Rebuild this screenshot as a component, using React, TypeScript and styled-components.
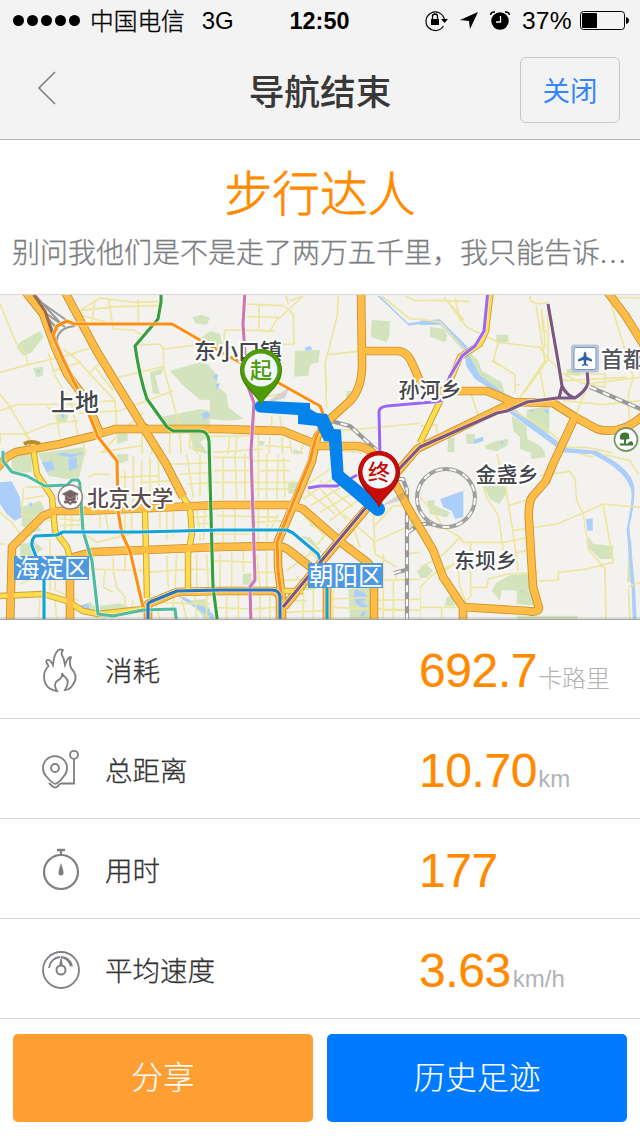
import React from "react";
import styled, { createGlobalStyle } from "styled-components";

const GlobalStyle = createGlobalStyle`
  * { box-sizing: border-box; }
  body {
    margin: 0;
    background: #fff;
    font-family: "Liberation Sans", "Noto Sans CJK SC", sans-serif;
  }
`;

const Screen = styled.div`
  width: 640px;
  height: 1136px;
  display: flex;
  flex-direction: column;
  background: #fff;
  overflow: hidden;
`;

const StatusBar = styled.header`
  display: grid;
  grid-template-columns: 1fr auto 1fr;
  align-items: center;
  height: 40px;
  padding: 0 11px 2px 13px;
  background: #f3f3f3;
  color: #000;
  font-size: 24px;
  line-height: 38px;
`;

const StatusSide = styled.div<{ $end?: boolean }>`
  display: flex;
  align-items: center;
  justify-content: ${(p) => (p.$end ? "flex-end" : "flex-start")};
  height: 38px;
`;

const SignalDots = styled.div`
  display: flex;
  gap: 3px;
  margin-right: 10px;
`;

const Dot = styled.i`
  width: 11px;
  height: 11px;
  border-radius: 50%;
  background: #000;
`;

const Carrier = styled.span`
  font-family: "Noto Sans CJK SC", sans-serif;
  font-weight: 300;
  font-size: 23.7px;
  -webkit-text-stroke: 0.35px currentColor;
`;

const Network = styled.span`
  margin-left: 17px;
  padding-top: 2px;
`;

const Clock = styled.time`
  font-weight: 700;
  font-size: 23.4px;
  padding: 2px 3px 0 0;
`;

const Percent = styled.span`
  font-size: 24.6px;
  letter-spacing: 0.3px;
  margin: 2px 8px 0 11px;
`;

const NavBar = styled.nav`
  display: grid;
  grid-template-columns: 100px 1fr 100px;
  align-items: center;
  height: 100px;
  padding: 0 20px;
  background: #f3f3f3;
  border-bottom: 1px solid #b4b4b4;
`;

const BackButton = styled.button`
  width: 54px;
  height: 66px;
  padding: 0;
  margin-bottom: 2px;
  border: 0;
  background: none;
`;

const NavTitle = styled.h1`
  margin: 0;
  text-align: center;
  font: 500 35.7px/50px "Noto Sans CJK SC", sans-serif;
  color: #383838;
`;

const CloseButton = styled.button`
  height: 66px;
  padding: 0 0 1px;
  border: 1px solid #c8c8c8;
  border-radius: 6px;
  background: none;
  color: #3385ff;
  font: 400 27.5px/60px "Noto Sans CJK SC", sans-serif;
`;

const Hero = styled.section`
  height: 155px;
  padding: 16px 12px 0;
  border-bottom: 1px solid #d6d6d6;
  text-align: center;
`;

const HeroTitle = styled.h2`
  margin: 0;
  color: #ff8a00;
  font: 300 47.7px/70px "Noto Sans CJK SC", sans-serif;
  -webkit-text-stroke: 0.8px currentColor;
`;

const HeroText = styled.p`
  margin: 3px 0 0;
  color: #7c7e82;
  font: 300 28px/44px "Noto Sans CJK SC", sans-serif;
  -webkit-text-stroke: 0.3px currentColor;
  text-align: left;
  white-space: nowrap;
`;

const Ellipsis = styled.span`
  letter-spacing: 2.4px;
`;

const MapFrame = styled.section`
  flex: none;
  height: 325px;
  border-bottom: 1px solid #a9a8a6;
  overflow: hidden;
`;

const StatList = styled.ul`
  list-style: none;
  margin: 0;
  padding: 0;
`;

const StatRow = styled.li`
  display: grid;
  grid-template-columns: 105px 314px 1fr;
  align-items: center;
  height: 100px;
  padding-top: 1px;
  border-bottom: 1px solid #d6d6d6;

  &:first-child {
    height: 99px;
    padding-top: 0;
  }
`;

const StatIcon = styled.svg`
  width: 44px;
  height: 48px;
  margin: 4px 0 0 39px;
  fill: none;
  stroke: #7d7f83;
  stroke-width: 1.8;
`;

const StatLabel = styled.span`
  color: #333;
  font: 300 27.5px/40px "Noto Sans CJK SC", sans-serif;
  -webkit-text-stroke: 0.3px currentColor;
`;

const StatValue = styled.span`
  display: flex;
  align-items: baseline;
  padding-top: 4px;
  color: #ff8a00;
  font-size: 48px;
  line-height: 56px;
  letter-spacing: -0.4px;
  -webkit-text-stroke: 0.2px currentColor;
`;

const Unit = styled.small<{ $gap?: number }>`
  margin-left: ${(p) => p.$gap ?? 0}px;
  color: #b0b3b7;
  font-size: 24px;
  font-weight: 300;
  line-height: 20px;
  letter-spacing: 0;
  -webkit-text-stroke: 0;
`;

const Actions = styled.footer`
  display: flex;
  flex: none;
  gap: 14px;
  padding: 15px 13px 0;
`;

const ActionButton = styled.button<{ $color: string }>`
  flex: 1;
  height: 88px;
  padding: 0 0 6px;
  border: 0;
  border-radius: 5px;
  background: ${(p) => p.$color};
  color: #fff;
  font: 300 31.7px/60px "Noto Sans CJK SC", sans-serif;
  -webkit-text-stroke: 0.15px currentColor;
`;

const MapText = styled.text<{ $size?: number; $tone?: string }>`
  font-family: "Noto Sans CJK SC", sans-serif;
  font-weight: 500;
  font-size: ${(p) => p.$size ?? 21}px;
  fill: ${(p) => p.$tone ?? "#44464b"};
  stroke: #fff;
  stroke-width: 4px;
  stroke-linejoin: round;
  paint-order: stroke;
`;

const DistrictText = styled.text`
  font-family: "Noto Sans CJK SC", sans-serif;
  font-size: 24.5px;
  fill: #fff;
`;

const PinText = styled.text`
  font-family: "Noto Sans CJK SC", sans-serif;
  font-weight: 500;
  font-size: 22px;
  text-anchor: middle;
`;

/* The map is surveyed in six sheets, each drawn at three times its size. */
type Sheet = { x: number; y: number; green: string; water: string; minor: string };

const sheets: Sheet[] = [
  {
    x: 0, y: 294,
    green: "M60 145L120 110L130 130L95 175L70 185L50 160ZM578 70L605 62L630 72L620 92L585 88ZM600 135L625 115L660 110V165L620 170ZM100 222L130 218L128 245L108 250ZM510 230L600 205L660 222V315L600 318L545 270ZM450 235L490 222L485 240L465 245L480 300L458 298ZM480 370L600 345L660 355V395H500ZM170 350L205 362L200 385H170ZM350 415H383V440L352 450ZM50 485L110 478L250 460L255 510H40ZM570 420L600 415L620 430L600 445L625 480L580 470Z",
    water: "M168 480L200 475L205 500L172 508ZM225 480L248 475L250 500L228 502ZM605 360L620 352L632 365L612 378ZM180 362L195 358L190 375ZM110 230L122 228L118 238ZM632 270L650 265L640 285Z",
    minor: "M0 30L50 150L75 175L85 212M0 235L85 212L200 185L270 162M240 50L300 12L345 18L410 25L480 22M240 50L345 38L478 35M285 20L275 85M325 10L340 105L400 108L430 125M415 15V90M235 62L330 88M145 178L165 245L215 330L235 430M155 232L240 205L190 165M215 180L270 240L345 320L352 425L310 470M265 240L312 195M285 220L340 290M355 250L490 218M400 155L480 150L490 165L640 148M490 165L492 225L540 400M360 350L520 290M360 350L235 358M0 350L50 332L245 330M0 420H75L150 390L235 380M75 420L98 450M0 300L30 340L98 450M140 340L165 350L180 430M270 325L345 320M250 445L262 510M300 475L425 455M345 420L365 410L430 355M425 410L428 510M455 440V510M510 410L508 510M540 415L545 510M570 420L568 460L610 470M595 475L560 510M490 495L660 490M0 418V450",
  },
  {
    x: 210, y: 294,
    green: "M485 78L540 82L538 125L530 145L482 128ZM255 170L330 168L325 205L300 212L295 245L252 248ZM0 110L30 120L40 165H0ZM0 220L20 240L25 280L50 300L55 340L100 375L60 380L0 375ZM410 290L425 292V310L408 312ZM250 465L280 475L270 500H252ZM145 440L165 442L160 455H148Z",
    water: "M510 6L595 88L660 78V86L597 95L502 6ZM283 162L300 155L308 165L290 172ZM8 245L25 240L20 262ZM15 270L30 268L22 285Z",
    minor: "M105 30L220 35L250 60L252 150L190 152L155 210M240 20L280 6M147 32V105M110 68L205 70M228 6L235 30M205 70L180 110L45 108L40 165M105 108L195 112M205 75L280 6M385 6L382 65L345 210L350 345M355 182L445 172M515 6L600 75L660 75M585 6L615 20L660 18M190 320Q220 340 200 360M345 210L350 290M130 385L135 365M185 365V405M210 365L215 410M50 510L60 425M80 430L75 510M145 420V510M0 428L130 425M10 475L160 465M180 430L175 510M215 430L220 510M240 440L250 510M280 450L260 510M395 410L660 385M380 470L450 475L480 510M400 450L350 510M155 310L210 300M165 455L240 460",
  },
  {
    x: 420, y: 294,
    green: "M30 98L70 105L82 125L75 145L30 128ZM230 122L265 122V145H228ZM150 175L175 200L185 230L245 265L255 300L205 270L150 230ZM320 348L388 335V420L320 395ZM275 365L320 395L322 435L360 455L375 475L370 495L340 480L300 465L300 430L280 410ZM85 430H103V475L82 475ZM138 420H165V448L140 450ZM195 455L230 440L265 435L262 455L230 472L198 465ZM440 225L480 222V245L440 242Z",
    water: "M0 80L60 76L140 155L150 190L180 245L255 300L290 350L440 462L530 470L600 510H585L520 482L430 475L270 358L235 300L165 255L138 215L135 175L60 92L0 93ZM165 435L190 428V442L160 450ZM325 350L340 345V355ZM370 350L385 345V360ZM240 445L250 442L248 455Z",
    minor: "M0 20L80 18L140 100L235 145L360 160L385 195L430 240L480 265L500 268L555 280M72 10L130 75L120 80L105 10M235 145L220 200L285 242V298M360 232L380 340M215 200L282 240M330 6V20L355 30L385 25M348 35L375 200L290 325M370 75L375 160L360 170M383 30L385 195L310 300M365 45L368 110L380 115M570 10V20L640 250L625 300L628 400M590 10L660 12M425 240L430 260L620 250M430 240L555 240M500 270L660 250M500 280L465 370M430 320L550 332L660 320M280 350L380 405L440 460L500 460L570 475L600 510M0 395L50 392V420M150 290L180 380M50 20L150 22M285 272H300M0 75L60 85L135 170M555 240V280",
  },
  {
    x: 0, y: 454,
    green: "M35 0L95 0L95 55L35 58ZM115 0L255 0L235 80L200 75L145 65ZM65 160L120 140L135 165L100 205L125 230L95 235L65 215ZM60 270L105 265L130 285L75 320L60 305ZM300 455L360 448L390 460L350 475H300ZM235 455L270 445L300 470L260 475ZM570 440L615 435L635 480L640 495H615ZM350 0H385V20L355 30Z",
    water: "M0 85L35 82L60 130L65 190L45 200L20 180L0 150ZM125 25L155 20L165 45L140 55ZM205 15L230 10L232 40L208 52ZM165 0H240L215 12ZM235 455L265 448L270 465L245 470ZM530 425L555 430L590 450L640 470L640 495L600 470ZM85 150L95 145V160Z",
    minor: "M0 175L35 205L60 240M70 100L65 180L150 200M75 100L145 98M75 135L130 125M235 80L245 110M265 70L285 60L330 62M360 70L480 65M375 50V160M400 5V155M425 20V145M450 10V150M475 15L478 155M355 125L540 115M420 85L520 80M195 180V230M215 180V235M240 190L250 230M180 195L240 200M180 215L260 212M315 170L325 230M300 175V220M260 245L290 265L430 230M60 245L150 240M150 255V310M60 310L200 305L220 320M60 335L260 345L435 350M340 310V350L350 400L375 430V475M375 180V350M395 170V230M480 160V225M500 160V260M520 160V250M590 170L600 235M615 165L610 260M580 190L660 185M590 210L660 205M600 240V260M440 355L590 345M500 305L505 400M530 300L525 400M590 300V400M590 345L660 350M620 300L625 400M150 350V410M110 380L150 365M165 315V410M170 410L235 440M315 345L310 400L340 415M185 375H260M400 440L390 485M520 420V495M540 415L560 495M585 410L590 495M620 420V495M430 445L660 450M460 425L480 495M310 495L340 465M120 435L115 495M165 440L170 495M60 390L125 360L120 315M510 30L540 30L660 25M560 0L580 130M600 0V125M625 0V115M540 60L660 55M560 90L660 85M0 270H15",
  },
  {
    x: 210, y: 454,
    green: "M235 85L290 90L265 120L235 118ZM300 195L325 190V225L300 215ZM98 360L125 358V392L98 392ZM415 405L490 400L480 495H420ZM600 195L640 210L630 230L600 225ZM415 275L430 270L425 290ZM620 350L660 330V375L630 370ZM275 410L325 375L320 405ZM275 245L300 250L350 310L320 285Z",
    water: "M435 405L460 415L475 430L455 445L475 455L460 465L440 450L430 430ZM460 470L470 475L458 490L450 485ZM0 475Q15 480 12 495H0Z",
    minor: "M10 10H120M10 50L120 50M10 85L290 85M40 10V135M75 0L80 135M105 0V135M145 0V135M170 0V135M205 0L200 135M130 20L240 20M150 50L240 50M220 10L225 130M135 105H260M20 185L205 190M40 170V265M75 165V260M145 160V265M175 165L170 260M205 180L180 230M135 205L220 200M10 240L120 240M30 300V400M65 295V400M100 290V355M10 320L130 325M140 300L150 400M170 290V400M135 355H200M15 430V495M50 425V495M85 420V495M150 420V495M180 425V495M10 460L120 465M125 465L200 460M265 110L360 45M280 135L375 70M300 155L410 90M330 175L440 110M360 200L455 130M290 110L375 180M330 80L430 160M375 80L470 160M320 90L410 200M285 190L345 245L270 330M300 180L380 260M350 215L450 310M400 180L490 260L495 300L560 340M470 180L390 260M495 215L550 155H575M490 180L495 295M500 260L590 220M450 280L430 220M520 300L520 495M480 380L660 375M480 440L660 435M550 380V495M555 355L560 380M590 300L660 290M360 435L490 430M370 460L660 470M370 405V495M230 350L300 300M220 380L300 375M220 440L290 440M225 475L340 470M280 400V495M310 400V495M300 290L380 380",
  },
  {
    x: 420, y: 454,
    green: "M180 70L260 80L258 120L238 150L210 135L195 105ZM330 0L375 0V10L335 15ZM20 140L42 138L45 155L90 175L80 190L30 180ZM505 245L520 270L580 275L578 315L540 315L505 280ZM0 340L20 332L40 350L20 372H0ZM215 410L230 385L275 362L325 360L345 455L290 450V410L245 408L240 440ZM80 430L100 425L105 455H75ZM290 485L370 485L475 485L470 497H290ZM625 260H635V385H622Z",
    water: "M60 135L130 110L130 190L105 195L95 170L70 160ZM498 195L518 193V230H502ZM520 0H545Q635 45 643 100Q645 150 628 220L645 400L650 497H638L635 405L620 225Q635 150 635 120Q630 55 515 0ZM300 410L308 408V420Z",
    minor: "M180 70L200 130L235 185L250 290M230 0L255 90L280 240L295 350M265 155L320 138M280 230L410 210L495 175L550 150L660 160M360 65L450 52L465 75L470 140L490 180L505 285L555 345L558 495M550 155L580 325L500 345L415 355V378L355 382M0 130L45 180L70 220L120 250L130 265L250 265L330 250M120 250L60 310L0 340M152 265V430M155 400H200L205 375L265 360L355 355M90 335L40 360L0 400V495M0 460H110M65 460V495M150 430L120 450M625 400L660 385M625 405L630 495M75 350L100 330L115 350L120 400L140 450M545 0L630 20L655 60M480 0L520 10M270 300L320 290",
  },
];

const highways = [
  "M64 290L96 350L143 427L166 464L183 497",
  "M24 290L43 314L55 347L67 374L82 394L93 417L100 433",
  "M-5 470L7 457L16 452L60 444L93 436L115 429H220L283 431L320 446H357Q370 447 382 462L397 487L410 511L433 550L443 577L463 607V625",
  "M361 290L362 361Q363 387 350 401L328 421L317 437L312 461L297 497L278 541L278 565L282 600V622",
  "M365 351H397Q407 351 412 363L420 381L433 391H487L513 402L553 403L575 417L597 429Q622 436 645 414",
  "M606 290L625 315L645 347",
  "M575 417L553 464L546 481L532 497Q528 504 529 521L533 587L539 608Q538 613 528 611L463 607",
  "M10 625L11 587L12 547L20 539L43 516L55 511H83L220 505H290L303 509L343 544L367 562Q374 568 374 580V625",
  "M70 625V567L74 557L93 552L220 547L273 546Q283 545 290 551L327 580V625",
  "M148 625V604L177 592L220 591H273Q280 592 280 600V625",
  "M284 607L323 560L400 469L417 449L497 410L513 402",
];

const yellowRoads = [
  "M33 444L34 454L37 474L52 497L55 531L67 547L70 558",
  "M145 512L146 550L147 598",
  "M0 596L43 594L67 601L83 611L98 614L143 609",
  "M183 497L190 507L192 534L188 554V590",
  "M420 443L442 397L453 374L460 357L480 344L486 331L491 290",
  "M283 591H303",
];

const railways = [
  "M327 420L350 426L383 456L400 480",
  "M398 479H403L407 490V622",
  "M590 387L645 411",
  "M407 533Q424 520 434 525",
  "M394 573L406 570",
];

const subways: { color: string; d: string }[] = [
  { color: "#359f3b", d: "M161 290V302L158 319L135 346Q140 379 147 399L167 427L173 431H200Q208 431 209 441L213 587L218 625" },
  { color: "#cb76b5", d: "M245 290L243 324L247 384L254 403L251 451L255 580L250 587L251 625" },
  { color: "#ff8f14", d: "M80 394L62 357L53 336L57 326L67 321L74 324H172L200 340L230 357L277 382L320 406L325 419L316 437L310 461L277 542L278 571L282 600" },
  { color: "#ff8f14", d: "M80 394L90 417L98 437L117 461L118 511L122 534L130 551L143 607" },
  { color: "#4fbba2", d: "M3 451V461L12 472L27 476L45 486L67 485L72 480H77Q80 480 80 487L83 531L92 561L98 614L113 616L143 610L175 609L177 625" },
  { color: "#11a2d8", d: "M44 625V577L32 546Q31 540 35 536L57 535L63 532H140L220 530H287L293 533L318 554L324 570L327 590V625" },
  { color: "#2478bf", d: "M148 625V604Q149 602 155 600L177 591L220 590H272Q280 590 280 598V625" },
  { color: "#9b68f5", d: "M488 290L484 331L475 346L462 356L450 376L442 400Q438 402 433 402L387 406Q379 407 379 412L380 456" },
  { color: "#9b68f5", d: "M308 488L320 486H337L357 475" },
  { color: "#7c5881", d: "M548 304L558 361L562 386Q567 396 575 398M587 369L588 383Q586 391 575 398H557L527 402L507 411L497 413L420 447L400 468L377 494L283 607M562 386L559 398" },
];

function Pin({ x, y, color, dark, glyph }: { x: number; y: number; color: string; dark: string; glyph: string }) {
  return (
    <g transform={`translate(${x} ${y})`}>
      <path d="M2 33L29 16L24 27Z" fill="#777" opacity="0.25" />
      <path d="M0 35C-3 24 -21 16 -21 -1A21 21 0 0 1 21 -1C21 16 3 24 0 35Z" fill={dark} />
      <path d="M0 34C-2 23 -20 15 -20 -2A20 20 0 0 1 20 -2C20 11 11 18 6 24Z" fill={color} />
      <circle r="16.5" cy="-1" fill="#f1f7fb" />
      <PinText y="7" fill={color}>{glyph}</PinText>
    </g>
  );
}

function RouteMap() {
  return (
    <svg width="640" height="325" viewBox="0 295 640 325" strokeLinejoin="round">
      <rect y="295" width="640" height="325" fill="#f4f2ef" />
      {sheets.map((s) => (
        <svg key={`${s.x}-${s.y}`} x={s.x} y={s.y} width={s.x === 420 ? 220 : 210} height={s.y === 294 ? 160 : 170}
          viewBox={`0 0 ${s.x === 420 ? 660 : 630} ${s.y === 294 ? 480 : 510}`}>
          <path d={s.green} fill="#d2e3bd" />
          <path d={s.water} fill="#accefb" />
          <path d={s.minor} fill="none" stroke="#ece69f" strokeWidth="5" />
        </svg>
      ))}
      <g fill="none">
        <path d="M35 295L63 326M38 300L66 320M40 309L58 330M36 306L65 327M57 345Q55 328 75 326" stroke="#999" strokeWidth="2" />
        <circle cx="446" cy="498" r="29" stroke="#a0a0a0" strokeWidth="4" />
        <circle cx="446" cy="498" r="29" stroke="#f8f8f8" strokeWidth="2" strokeDasharray="7 7" />
        {railways.map((d) => <path key={d} d={d} stroke="#999" strokeWidth="4.2" />)}
        {railways.map((d) => <path key={`${d}-gap`} d={d} stroke="#f8f8f8" strokeWidth="2.2" strokeDasharray="7 7" />)}
        {yellowRoads.map((d) => <path key={d} d={d} stroke="#c8a13a" strokeWidth="6.4" />)}
        {highways.map((d) => <path key={d} d={d} stroke="#c8922c" strokeWidth="8.6" />)}
        <path d="M24 444Q31 440 40 444M143 424L151 429" stroke="#b98a32" strokeWidth="4" />
        {yellowRoads.map((d) => <path key={`${d}-fill`} d={d} stroke="#ffdc4c" strokeWidth="4.6" />)}
        {highways.map((d) => <path key={`${d}-fill`} d={d} stroke="#ffbd48" strokeWidth="6.8" />)}
        <path d="M34 295L45 311L53 335" stroke="#9b6b4b" strokeWidth="3" />
        {subways.map((s) => (
          <g key={s.d}>
            <path d={s.d} stroke="#fff" strokeOpacity="0.55" strokeWidth="4.6" />
            <path d={s.d} stroke={s.color} strokeWidth="3.1" />
          </g>
        ))}
      </g>

      <MapText x="51" y="411" $size={24}>上地</MapText>
      <MapText x="194" y="359" $size={22}>东小口镇</MapText>
      <MapText x="398.5" y="397">孙河乡</MapText>
      <MapText x="475.5" y="481.5">金盏乡</MapText>
      <MapText x="454" y="568">东坝乡</MapText>
      <MapText x="87" y="505.5" $size={21.6} $tone="#5c4d4d">北京大学</MapText>
      <MapText x="601" y="366.5" $size={22} $tone="#55575d">首都</MapText>

      <rect x="14" y="556" width="75" height="24" fill="#4d98df" />
      <DistrictText x="15" y="577">海淀区</DistrictText>
      <rect x="308" y="563" width="75" height="25" fill="#4d98df" />
      <DistrictText x="309" y="585">朝阳区</DistrictText>

      <g transform="translate(70.3 497)">
        <circle r="12" fill="#fff" stroke="#918484" strokeWidth="1.6" />
        <path d="M-8 -3L0 -7L8 -3L0 1ZM-5 -1V3Q0 5 5 3V-1L0 2ZM7 -3V3M-6 4H-2L0 6L2 4H6V6H2L0 8L-2 6H-6Z" fill="#786363" stroke="#786363" strokeWidth="0.7" />
      </g>
      <g transform="translate(585 358.5)">
        <rect x="-14" y="-14" width="28" height="28" rx="3" fill="#b6c5dc" />
        <rect x="-11" y="-11" width="22" height="22" rx="2" fill="#fff" stroke="#7796c2" />
        <path d="M0 -7Q1.5 -6 1.5 -2L7 1V3L1.5 1.5L1 5L3 6.5V7.5L0 6.8L-3 7.5V6.5L-1 5L-1.5 1.5L-7 3V1L-1.5 -2Q-1.5 -6 0 -7Z" fill="#305fa8" />
      </g>
      <g transform="translate(626 439.5)">
        <circle r="11.5" fill="#fff" stroke="#779768" strokeWidth="1.8" />
        <path d="M-2 4V0Q-7 1 -6 -3Q-6 -7 -1 -7Q4 -7 3 -3Q5 0 0 0V4Q3 4 3 6H-6Q-7 3 -3 4ZM4 2Q7 1 7 4V6H2Q1 3 4 2Z" fill="#3f7836" />
      </g>

      <path d="M261 400.7L310 403V409L317 413L327 414L334 429L341 429.5L343.5 472L383 504A6.4 6.4 0 0 1 373 514L332 479L329 441.5L324 441L317 426L298 424V415L260 412.5A5.9 5.9 0 0 1 261 400.7Z" fill="#0484eb" />
      <Pin x={261} y={371} color="#4d9c08" dark="#3f8106" glyph="起" />
      <Pin x={379} y={473} color="#c70d08" dark="#9f0803" glyph="终" />
      <rect y="617" width="640" height="2" fill="#777" opacity="0.2" />
    </svg>
  );
}

const stats = [
  {
    label: "消耗", value: "692.7", unit: "卡路里", gap: 1,
    icon: <path d="M18 44Q5 42 5 29Q5 24 9.5 19Q6 14 8 13Q11 12 14 18Q15 9 17 6Q20 1 24 3Q21 7 24.5 11L26 18Q28 12 31 10Q33 9 31 13L31 18Q32 22 35 25Q39 32 33 39Q30 43 26 43Q31 35 27 31Q24 29 23 26Q24 31 18 34Q14 37 18 44Z" />,
  },
  {
    label: "总距离", value: "10.70", unit: "km", gap: 1,
    icon: (
      <>
        <path d="M16 37Q13 36 7 29A12 12 0 1 1 25 29Q20 36 16 37Z" />
        <circle cx="16" cy="21" r="4" />
        <circle cx="35" cy="7.8" r="4" />
        <path d="M35 12V36.5H22Q20 37 19 39Q16 42 13 39L10 36" />
      </>
    ),
  },
  {
    label: "用时", value: "177", unit: "", gap: 0,
    icon: (
      <>
        <circle cx="22" cy="25" r="17" strokeWidth="2.2" />
        <path d="M18 3H26M22 3V8" strokeWidth="2.3" />
        <path d="M22 16Q24.5 23 24.5 26A2.5 2.5 0 0 1 19.5 26Q19.5 23 22 16Z" fill="#7d7f83" stroke="none" />
      </>
    ),
  },
  {
    label: "平均速度", value: "3.63", unit: "km/h", gap: 2,
    icon: (
      <>
        <circle cx="22" cy="23" r="18" />
        <path d="M10 21A12 12 0 0 1 21 10" />
        <path d="M22 9Q31 9 34 19L31 19.5Q29 12 22 11Z" fill="#7d7f83" stroke="none" />
        <circle cx="22" cy="23" r="4.5" strokeWidth="2" />
        <path d="M22 9L24 19H20Z" fill="#7d7f83" stroke="none" />
      </>
    ),
  },
];

export default function App() {
  return (
    <>
      <GlobalStyle />
      <Screen>
        <StatusBar>
          <StatusSide>
            <SignalDots>{[0, 1, 2, 3, 4].map((n) => <Dot key={n} />)}</SignalDots>
            <Carrier>中国电信</Carrier>
            <Network>3G</Network>
          </StatusSide>
          <Clock>12:50</Clock>
          <StatusSide $end>
            <svg width="87" height="24" viewBox="0 0 87 24">
              <path d="M19.3 18A9.3 9.3 0 1 1 20.3 11" fill="none" stroke="#000" strokeWidth="1.2" />
              <path d="M17 11H24L20.5 15Z" />
              <path d="M7 11H15V17H7Z" />
              <path d="M8.5 11V8.5A2.5 2.5 0 0 1 13.5 8.5V11" fill="none" stroke="#000" strokeWidth="1.3" />
              <path d="M54 4L46 21L45 13L36 12Z" />
              <circle cx="76" cy="13" r="8.7" />
              <path d="M66.5 7Q67 3.5 71 4M85.5 7Q85 3.5 81 4" fill="none" stroke="#000" strokeWidth="1.5" />
              <path d="M76.5 8V14H72" fill="none" stroke="#f3f3f3" strokeWidth="1.3" />
            </svg>
            <Percent>37%</Percent>
            <svg width="49" height="20" viewBox="0 0 49 20">
              <rect x="0.5" y="1.5" width="44" height="18" rx="3" fill="none" stroke="#000" />
              <rect x="2" y="3" width="15" height="15" rx="1" />
              <path d="M46 7Q49 8 49 10.5Q49 13 46 14Z" />
            </svg>
          </StatusSide>
        </StatusBar>

        <NavBar>
          <BackButton aria-label="返回">
            <svg width="54" height="66" viewBox="0 0 54 66">
              <path d="M35 16L19 32L35 48" fill="none" stroke="#7d7f83" strokeWidth="1.6" />
            </svg>
          </BackButton>
          <NavTitle>导航结束</NavTitle>
          <CloseButton>关闭</CloseButton>
        </NavBar>

        <Hero>
          <HeroTitle>步行达人</HeroTitle>
          <HeroText>别问我他们是不是走了两万五千里，我只能告诉<Ellipsis>...</Ellipsis></HeroText>
        </Hero>

        <MapFrame>
          <RouteMap />
        </MapFrame>

        <StatList>
          {stats.map((s) => (
            <StatRow key={s.label}>
              <StatIcon viewBox="0 0 44 48">{s.icon}</StatIcon>
              <StatLabel>{s.label}</StatLabel>
              <StatValue>
                {s.value}
                {s.unit && <Unit $gap={s.gap}>{s.unit}</Unit>}
              </StatValue>
            </StatRow>
          ))}
        </StatList>

        <Actions>
          <ActionButton $color="#ff9e33">分享</ActionButton>
          <ActionButton $color="#007aff">历史足迹</ActionButton>
        </Actions>
      </Screen>
    </>
  );
}
